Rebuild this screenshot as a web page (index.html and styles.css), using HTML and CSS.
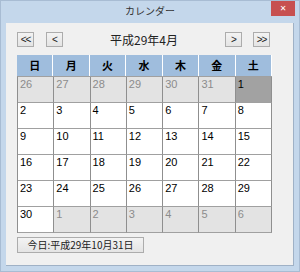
FILE: index.html
```html
<html><head>
<meta charset="UTF-8">
<meta name="viewport" content="width=device-width, initial-scale=1.0">
<title>カレンダー</title>
<link rel="stylesheet" href="styles.css">
</head>
<body>
  <div class="window">
    <div class="titlebar">
      <span></span>
      <span class="title">カレンダー</span>
      <button class="close">&#x2715;</button>
    </div>
    <div class="client">
      <div class="nav">
        <button class="nav-btn">&lt;&lt;</button>
        <button class="nav-btn">&lt;</button>
        <span class="month">平成29年4月</span>
        <button class="nav-btn">&gt;</button>
        <button class="nav-btn">&gt;&gt;</button>
      </div>
      <div class="week">
        <div>日</div><div>月</div><div>火</div><div>水</div><div>木</div><div>金</div><div>土</div>
      </div>
      <div class="days" id="days"></div>
      <button class="today">今日:平成29年10月31日</button>
    </div>
  </div>

  <script>
    // 2017年4月: 3月26日から5月6日まで
    const cells = [];
    [26, 27, 28, 29, 30, 31].forEach(d => cells.push({ d, other: true }));
    for (let d = 1; d <= 30; d++) cells.push({ d, other: false });
    for (let d = 1; d <= 6; d++) cells.push({ d, other: true });

    const days = document.getElementById('days');
    cells.forEach((c, i) => {
      const el = document.createElement('div');
      el.className = 'day' + (c.other ? ' other' : '') + (i === 6 ? ' selected' : '');
      el.textContent = c.d;
      days.appendChild(el);
    });
  </script>
</body>
</html>
```

FILE: styles.css
```css
body {
  margin: 0;
  font-family: "Noto Sans CJK JP", sans-serif;
}
.window {
  width: 300px;
  height: 272px;
  box-sizing: border-box;
  border: 1px solid #a8bcd3;
  background-color: #c4d7eb;
}
.titlebar {
  height: 22px;
  display: grid;
  grid-template-columns: 1fr auto 1fr;
}
.title {
  font-size: 10px;
  line-height: 20px;
  color: #333333;
}
.close {
  justify-self: end;
  width: 24px;
  height: 15px;
  margin-right: 4px;
  padding: 0;
  border: none;
  background-color: #c75050;
  color: #ffffff;
  font-size: 8px;
  font-weight: bold;
  line-height: 15px;
  font-family: "DejaVu Sans", sans-serif;
}
.client {
  margin: 0 5px;
  height: 243px;
  box-sizing: border-box;
  border-right: 1px solid #9fb1c6;
  border-bottom: 1px solid #9fb1c6;
  background-color: #f0f0f0;
  padding: 9px 0 0 11px;
}
.nav {
  width: 253px;
  height: 15px;
  display: flex;
  align-items: center;
}
.nav-btn {
  width: 17px;
  height: 15px;
  padding: 0;
  border: 1px solid #acacac;
  background: linear-gradient(#f3f3f3, #e4e4e4);
  font-family: "Liberation Sans", sans-serif;
  font-size: 10px;
  line-height: 12px;
  letter-spacing: -1px;
  color: #222222;
}
.nav-btn:nth-child(2) {
  margin-left: 12px;
}
.nav-btn:nth-child(5) {
  margin-left: 11px;
}
.month {
  flex: 1;
  text-align: center;
  font-size: 12px;
  color: #222222;
}
.week {
  margin-top: 8px;
  width: 255px;
  height: 21px;
  display: grid;
  grid-template-columns: repeat(7, 1fr);
  background-color: #ffffff;
}
.week div {
  background-color: #9fbddd;
  margin-right: 1px;
  text-align: center;
  font-size: 11px;
  font-weight: bold;
  line-height: 21px;
  color: #000000;
}
.days {
  width: 255px;
  box-sizing: border-box;
  display: grid;
  grid-template-columns: repeat(7, 1fr);
  grid-template-rows: repeat(6, 26px);
  border-top: 1px solid #a0a0a0;
  border-left: 1px solid #8f8f8f;
}
.day {
  box-sizing: border-box;
  border-right: 1px solid #8f8f8f;
  border-bottom: 1px solid #a0a0a0;
  background-color: #ffffff;
  padding: 1px 0 0 2px;
  font-family: "Liberation Sans", sans-serif;
  font-size: 11px;
  line-height: 13px;
  color: #000000;
}
.day.other {
  background-color: #e3e3e3;
  color: #8c8c8c;
}
.day.selected {
  background-color: #a2a2a2;
  color: #000000;
}
.today {
  margin-top: 4px;
  width: 127px;
  height: 16px;
  padding: 0;
  border: 1px solid #acacac;
  background: linear-gradient(#f3f3f3, #e4e4e4);
  font-family: "Noto Sans CJK JP", sans-serif;
  font-size: 10px;
  line-height: 14px;
  color: #222222;
}
```
